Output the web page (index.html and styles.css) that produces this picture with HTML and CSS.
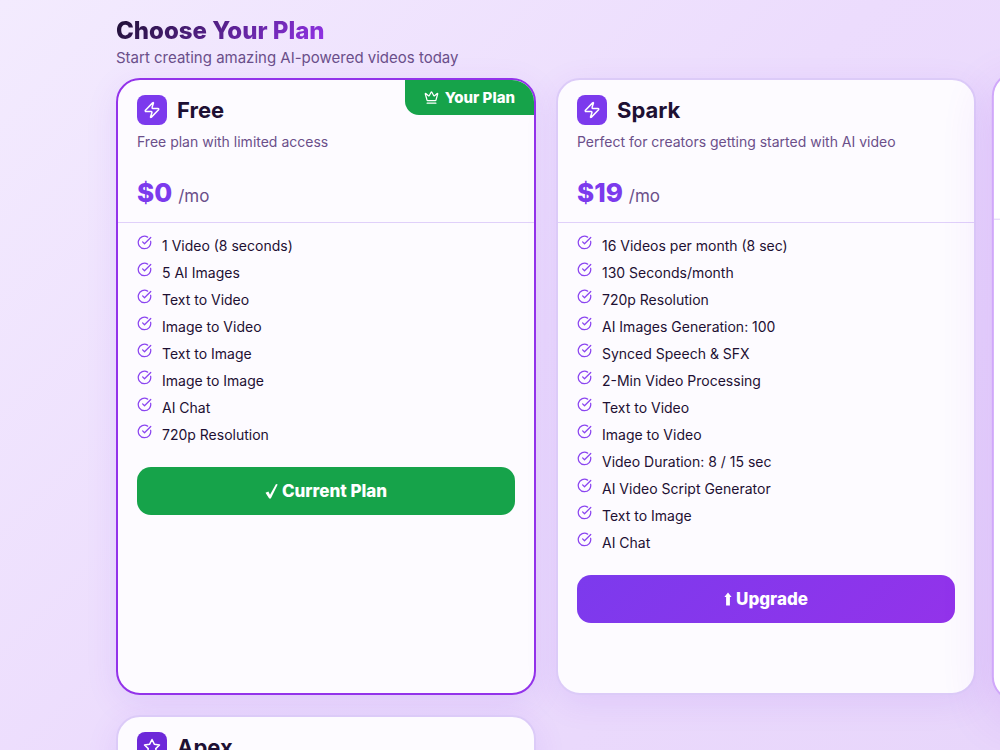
FILE: index.html
```html
<!DOCTYPE html>
<html lang="en">
<head>
    <meta charset="UTF-8">
    <meta name="viewport" content="width=device-width, initial-scale=1.0">
    <title>Choose Your Plan</title>
    <link rel="stylesheet" href="styles.css">
</head>
<body>
    <!-- shared icons -->
    <svg class="sprite" aria-hidden="true">
        <symbol id="icon-zap" viewBox="0 0 24 24">
            <path d="M4 14a1 1 0 0 1-.78-1.63l9.9-10.2a.5.5 0 0 1 .86.46l-1.92 6.02A1 1 0 0 0 13 10h7a1 1 0 0 1 .78 1.63l-9.9 10.2a.5.5 0 0 1-.86-.46l1.92-6.02A1 1 0 0 0 11 14z"/>
        </symbol>
        <symbol id="icon-star" viewBox="0 0 24 24">
            <path d="M12 2l3.09 6.26L22 9.27l-5 4.87 1.18 6.88L12 17.77l-6.18 3.25L7 14.14 2 9.27l6.91-1.01z"/>
        </symbol>
        <symbol id="icon-crown" viewBox="0 0 24 24">
            <path d="M11.562 3.266a.5.5 0 0 1 .876 0L15.39 8.87a1 1 0 0 0 1.516.294L21.183 5.5a.5.5 0 0 1 .798.519l-2.834 10.246a1 1 0 0 1-.956.734H5.81a1 1 0 0 1-.957-.734L2.02 6.02a.5.5 0 0 1 .798-.519l4.276 3.664a1 1 0 0 0 1.516-.294z"/>
            <path d="M5 21h14"/>
        </symbol>
        <symbol id="icon-check" viewBox="0 0 24 24">
            <path d="M21.801 10A10 10 0 1 1 17 3.335"/>
            <path d="m9 11 3 3L22 4"/>
        </symbol>
        <symbol id="icon-tick" viewBox="0 0 13 16">
            <path d="M.5 9.7l2.9-1.2 1.6 3.2L11 .9l1.7.5L5.8 15.4H4.2z"/>
        </symbol>
        <symbol id="icon-up" viewBox="0 0 8 16">
            <path d="M4 1.5L7.6 6H5.9v8.5H2.1V6H.4z"/>
        </symbol>
    </svg>

    <main class="page">
        <header class="page-header">
            <h1>Choose Your Plan</h1>
            <p>Start creating amazing AI-powered videos today</p>
        </header>

        <div class="plans">
            <section class="card current">
                <div class="badge"><svg class="icon"><use href="#icon-crown"/></svg>Your Plan</div>
                <div class="card-head">
                    <div class="plan-name">
                        <span class="plan-icon"><svg class="icon"><use href="#icon-zap"/></svg></span>
                        <h2>Free</h2>
                    </div>
                    <p class="desc">Free plan with limited access</p>
                    <p class="price"><strong>$0</strong> <span>/mo</span></p>
                </div>
                <div class="card-body">
                    <ul class="features">
                        <li><svg class="icon"><use href="#icon-check"/></svg>1 Video (8 seconds)</li>
                        <li><svg class="icon"><use href="#icon-check"/></svg>5 AI Images</li>
                        <li><svg class="icon"><use href="#icon-check"/></svg>Text to Video</li>
                        <li><svg class="icon"><use href="#icon-check"/></svg>Image to Video</li>
                        <li><svg class="icon"><use href="#icon-check"/></svg>Text to Image</li>
                        <li><svg class="icon"><use href="#icon-check"/></svg>Image to Image</li>
                        <li><svg class="icon"><use href="#icon-check"/></svg>AI Chat</li>
                        <li><svg class="icon"><use href="#icon-check"/></svg>720p Resolution</li>
                    </ul>
                    <button type="button" class="btn btn-current"><svg class="tick"><use href="#icon-tick"/></svg>Current Plan</button>
                </div>
            </section>

            <section class="card">
                <div class="card-head">
                    <div class="plan-name">
                        <span class="plan-icon"><svg class="icon"><use href="#icon-zap"/></svg></span>
                        <h2>Spark</h2>
                    </div>
                    <p class="desc">Perfect for creators getting started with AI video</p>
                    <p class="price"><strong>$19</strong> <span>/mo</span></p>
                </div>
                <div class="card-body">
                    <ul class="features">
                        <li><svg class="icon"><use href="#icon-check"/></svg>16 Videos per month (8 sec)</li>
                        <li><svg class="icon"><use href="#icon-check"/></svg>130 Seconds/month</li>
                        <li><svg class="icon"><use href="#icon-check"/></svg>720p Resolution</li>
                        <li><svg class="icon"><use href="#icon-check"/></svg>AI Images Generation: 100</li>
                        <li><svg class="icon"><use href="#icon-check"/></svg>Synced Speech &amp; SFX</li>
                        <li><svg class="icon"><use href="#icon-check"/></svg>2-Min Video Processing</li>
                        <li><svg class="icon"><use href="#icon-check"/></svg>Text to Video</li>
                        <li><svg class="icon"><use href="#icon-check"/></svg>Image to Video</li>
                        <li><svg class="icon"><use href="#icon-check"/></svg>Video Duration: 8 / 15 sec</li>
                        <li><svg class="icon"><use href="#icon-check"/></svg>AI Video Script Generator</li>
                        <li><svg class="icon"><use href="#icon-check"/></svg>Text to Image</li>
                        <li><svg class="icon"><use href="#icon-check"/></svg>AI Chat</li>
                    </ul>
                    <button type="button" class="btn btn-upgrade"><svg class="up"><use href="#icon-up"/></svg>Upgrade</button>
                </div>
            </section>

            <section class="card popular">
                <div class="card-head"></div>
            </section>

            <section class="card">
                <div class="card-head">
                    <div class="plan-name">
                        <span class="plan-icon apex"><svg class="icon"><use href="#icon-star"/></svg></span>
                        <h2>Apex</h2>
                    </div>
                </div>
            </section>
        </div>
    </main>
</body>
</html>
```
FILE: styles.css
```css
* {
    box-sizing: border-box;
    margin: 0;
    padding: 0;
}
body {
    font-family: Inter, "Liberation Sans", sans-serif;
    color: #1e1033;
    min-height: 100vh;
    background: linear-gradient(135deg, #f3ebfe 0%, #ecdcfd 50%, #e8d6fb 100%);
    background-attachment: fixed;
    overflow-x: hidden;
}
.sprite {
    display: none;
}
.icon {
    width: 15px;
    height: 15px;
    flex-shrink: 0;
    fill: none;
    stroke: currentColor;
    stroke-width: 2;
    stroke-linecap: round;
    stroke-linejoin: round;
}
.page {
    padding: 17px 0 20px 116px;
}
.page-header h1 {
    width: fit-content;
    font-size: 24px;
    line-height: 28px;
    font-weight: 800;
    background: linear-gradient(135deg, #1e1033, #9333ea);
    background-clip: text;
    -webkit-background-clip: text;
    color: transparent;
}
.page-header p {
    font-size: 15px;
    line-height: 26px;
    color: #6b4f8a;
    margin-bottom: 7px;
}

/* two plans fit the window, the third one peeks in from the right */
.plans {
    display: grid;
    grid-template-columns: repeat(3, calc((100vw - 160px) / 2));
    grid-auto-rows: minmax(617px, auto);
    gap: 20px;
}
.card {
    position: relative;
    background: #fdfbff;
    border: 2px solid #dccbf8;
    border-radius: 24px;
    box-shadow: 0 8px 32px rgba(124, 58, 237, 0.1);
    overflow: hidden;
}
.card.current {
    border-color: #9333ea;
}
.card.popular {
    background: #fff;
    border-color: #d0a8fa;
    box-shadow: 0 16px 48px rgba(147, 51, 234, 0.16);
    transform: scale(1.02);
}
.card-head {
    min-height: 143px;
    padding: 15px 19px 10px;
    border-bottom: 1px solid #e0d0fa;
}
.plan-name {
    display: flex;
    align-items: center;
    gap: 10px;
}
.plan-name h2 {
    font-size: 22px;
    line-height: 30px;
    font-weight: 700;
}
.plan-icon {
    display: flex;
    align-items: center;
    justify-content: center;
    width: 30px;
    height: 30px;
    border-radius: 8px;
    background: #7c3aed;
    color: #fff;
}
.plan-icon .icon {
    width: 18px;
    height: 18px;
}
.plan-icon.apex {
    background: #6d28d9;
}
.desc {
    font-size: 14px;
    line-height: 22px;
    margin-top: 6px;
    color: #6b4f8a;
}
.price {
    display: flex;
    align-items: baseline;
    gap: 6px;
    margin-top: 24px;
    line-height: 32px;
    font-size: 17px;
    color: #6b4f8a;
}
.price strong {
    font-size: 26px;
    font-weight: 800;
    color: #7c3aed;
}
.badge {
    position: absolute;
    top: 0;
    right: 0;
    display: flex;
    align-items: center;
    gap: 6px;
    padding: 0 19px;
    font-size: 15px;
    line-height: 35px;
    font-weight: 800;
    color: #fff;
    background: #16a34a;
    border-bottom-left-radius: 14px;
}
.card-body {
    padding: 12px 19px 19px;
}
.features {
    list-style: none;
}
.features li {
    display: flex;
    gap: 10px;
    padding-bottom: 5px;
    font-size: 14px;
    line-height: 22px;
}
.features .icon {
    color: #8b45f0;
}
.btn {
    display: flex;
    align-items: center;
    justify-content: center;
    gap: 4px;
    width: 100%;
    height: 48px;
    margin-top: 16px;
    border: none;
    border-radius: 14px;
    font-family: inherit;
    font-size: 17px;
    font-weight: 800;
    color: #fff;
    cursor: pointer;
}
.btn svg {
    height: 16px;
    fill: currentColor;
}
.btn .tick {
    width: 13px;
}
.btn .up {
    width: 8px;
}
.btn-current {
    background: #16a34a;
}
.btn-upgrade {
    background: linear-gradient(135deg, #7c3aed, #9333ea);
}
```
